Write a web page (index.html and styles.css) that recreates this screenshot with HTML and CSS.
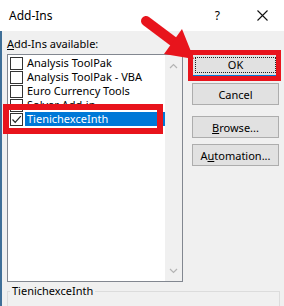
FILE: index.html
```html
<!DOCTYPE html>
<html lang="en">

<head>
    <meta charset="UTF-8">
    <meta name="viewport" content="width=device-width, initial-scale=1.0">
    <title>Add-Ins</title>
    <link rel="stylesheet" href="styles.css">
</head>

<body>
    <div class="dialog">
        <div class="titlebar">
            <span class="title">Add-Ins</span>
            <span class="help">?</span>
            <svg class="close" width="11" height="11" viewBox="0 0 11 11">
                <path d="M0.5 0.5 L10.5 10.5 M10.5 0.5 L0.5 10.5" stroke="#111" stroke-width="1.1" fill="none" />
            </svg>
        </div>
        <div class="body">
            <div class="main">
                <div class="left">
                    <div class="label"><u>A</u>dd-Ins available:</div>
                    <div class="listbox">
                        <ul class="items">
                            <li><span class="cb"></span><span class="name">Analysis ToolPak</span></li>
                            <li><span class="cb"></span><span class="name">Analysis ToolPak - VBA</span></li>
                            <li><span class="cb"></span><span class="name">Euro Currency Tools</span></li>
                            <li><span class="cb"></span><span class="name">Solver Add-in</span></li>
                            <li class="selected">
                                <span class="cb">
                                    <svg width="11" height="11" viewBox="0 0 11 11">
                                        <path d="M1.5 5.5 L4.2 8.3 L9.8 2.2" stroke="#222" stroke-width="1.2" fill="none" />
                                    </svg>
                                </span>
                                <span class="name">TienichexceInth</span>
                            </li>
                        </ul>
                        <div class="scrollbar">
                            <svg width="9" height="6" viewBox="0 0 9 6">
                                <path d="M1 5 L4.5 1.5 L8 5" stroke="#b4b4b4" stroke-width="1.2" fill="none" />
                            </svg>
                            <svg width="9" height="6" viewBox="0 0 9 6">
                                <path d="M1 1 L4.5 4.5 L8 1" stroke="#b4b4b4" stroke-width="1.2" fill="none" />
                            </svg>
                        </div>
                    </div>
                </div>
                <div class="buttons">
                    <button class="btn default"><span class="focus">OK</span></button>
                    <button class="btn cancel">Cancel</button>
                    <button class="btn browse"><u>B</u>rowse...</button>
                    <button class="btn auto">A<u>u</u>tomation...</button>
                </div>
            </div>
            <fieldset class="group">
                <legend>TienichexceInth</legend>
            </fieldset>
        </div>

        <!-- red marks drawn over the dialog -->
        <div class="mark mark-item"></div>
        <div class="mark mark-ok"></div>
        <svg class="arrow" width="284" height="306" viewBox="0 0 284 306">
            <line x1="146" y1="21" x2="174" y2="42" stroke="#e8141c" stroke-width="10" stroke-linecap="round" />
            <polygon points="182,29 164,54 194,59" fill="#e8141c" />
        </svg>
    </div>
</body>

</html>
```

FILE: styles.css
```css
body {
    margin: 0;
}

.dialog {
    position: relative;
    width: 284px;
    height: 306px;
    overflow: hidden;
    font-family: "Noto Sans", "Open Sans", sans-serif;
    font-size: 11px;
    color: #000;
}

.titlebar {
    height: 31px;
    background-color: #fff;
    display: flex;
    align-items: center;
    padding-left: 9px;
}

.title {
    flex: 1;
    font-size: 12px;
}

.help {
    font-size: 12px;
    margin-right: 37px;
}

.close {
    margin-right: 16px;
}

.body {
    height: 275px;
    box-sizing: border-box;
    background-color: #f0f0f0;
    border-left: 2px solid #3f6f98;
    padding: 6px 4px 0 5px;
}

.main {
    display: flex;
    gap: 9px;
}

.left {
    width: 176px;
}

.label {
    height: 14px;
    line-height: 14px;
}

.listbox {
    display: flex;
    margin-top: 3px;
    height: 228px;
    box-sizing: border-box;
    border: 1px solid #828790;
    background-color: #fff;
}

.items {
    flex: 1;
    list-style: none;
    margin: 0;
    padding: 1px 0 0 2px;
}

.items li {
    display: flex;
    align-items: center;
    height: 14px;
}

.cb {
    display: flex;
    align-items: center;
    justify-content: center;
    width: 13px;
    height: 13px;
    box-sizing: border-box;
    border: 1px solid #333;
    background-color: #fff;
}

.name {
    flex: 1;
    margin-left: 2px;
    padding: 0 2px;
    line-height: 14px;
    white-space: nowrap;
}

.selected .name {
    background-color: #0078d7;
    color: #fff;
}

.scrollbar {
    display: flex;
    flex-direction: column;
    justify-content: space-between;
    align-items: center;
    width: 17px;
    padding: 8px 0 7px;
    box-sizing: border-box;
    background-color: #f0f0f0;
}

.buttons {
    display: flex;
    flex-direction: column;
    width: 87px;
    margin-top: 17px;
}

.btn {
    height: 22px;
    padding: 0;
    border: 1px solid #adadad;
    background-color: #e1e1e1;
    font-family: inherit;
    font-size: 11px;
    color: #000;
}

.default {
    border-color: #0078d7;
    padding: 2px;
}

.focus {
    display: block;
    height: 100%;
    box-sizing: border-box;
    border: 1px dotted #222;
    line-height: 14px;
}

.cancel {
    margin-top: 7px;
}

.browse {
    margin-top: 11px;
}

.auto {
    margin-top: 6px;
}

.group {
    margin: 2px 0 0;
    padding: 0;
    height: 40px;
    border: 1px solid #dcdcdc;
}

.group legend {
    margin-left: 2px;
    padding: 0 2px;
    line-height: 14px;
}

.mark {
    position: absolute;
    border: 6px solid #e8141c;
    box-sizing: border-box;
}

.mark-item {
    left: 3px;
    top: 104px;
    width: 160px;
    height: 30px;
}

.mark-ok {
    left: 188px;
    top: 50px;
    width: 93px;
    height: 31px;
    border-width: 5px;
}

.arrow {
    position: absolute;
    left: 0;
    top: 0;
}
```
